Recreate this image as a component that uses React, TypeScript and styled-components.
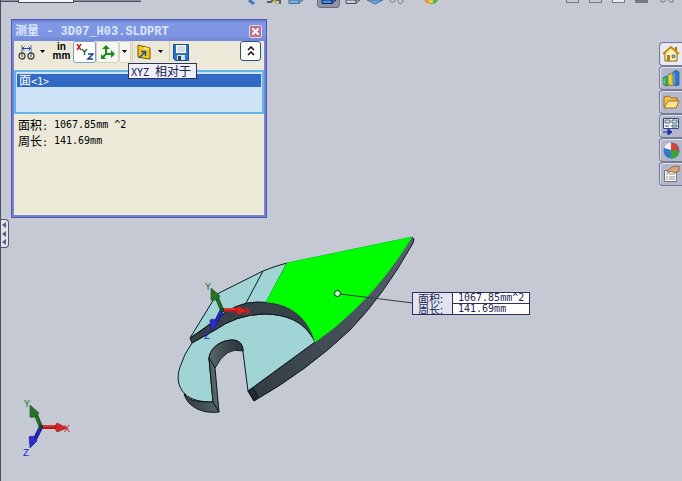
import React from "react";
import styled, { createGlobalStyle, css } from "styled-components";

const mono = `"DejaVu Sans Mono", "Noto Sans CJK SC", monospace`;

const GlobalStyle = createGlobalStyle`
  * { box-sizing: border-box; }
  body { margin: 0; background: #c5c9d4; font: 10px/16px ${mono}; color: #000; }
  button { font: inherit; color: inherit; padding: 0; border: 0; background: none; }
  svg { display: block; }
`;

const Page = styled.div`
  position: relative;
  min-height: 100vh;
  overflow: hidden;
  display: flex;
  flex-direction: column;
  border-left: 1px solid #4b4c5c;
  background: #c5c9d4;
`;

const Han = styled.span`
  font-family: "Noto Sans CJK SC", sans-serif;
  font-size: 12px;
`;

/* ---------- top edge ---------- */

const TopBar = styled.header`
  display: flex;
  align-items: flex-start;
  height: 9px;
`;

const DocTabs = styled.div`
  width: 140px;
  height: 2px;
  padding-left: 17px;
  border-bottom: 1px solid #4b4c5c;
  background: #8d90a0;
`;

const DocTab = styled.div`
  width: 56px;
  height: 3px;
  background: #f4f5fa;
  border: 1px solid #4b4c5c;
  border-top: 0;
`;

const ViewTools = styled.nav`
  display: flex;
  flex: 1;
  gap: 4px;
  padding-left: 102px;
`;

const ViewTool = styled.button<{ $on?: boolean; $lead?: number }>`
  display: flex;
  justify-content: center;
  width: ${(p) => (p.$on ? 23 : 18)}px;
  height: 8px;
  margin-left: ${(p) => p.$lead ?? 0}px;
  overflow: hidden;
  ${(p) =>
    p.$on &&
    css`
      background: #8f93a3;
      border: 1px solid #686b7c;
      border-top: 0;
      border-radius: 0 0 4px 4px;
    `}
`;

const WindowTools = styled.div`
  display: flex;
  gap: 10px;
  padding-right: 6px;
`;

const WindowTool = styled.button<{ $fill?: string }>`
  width: 13px;
  height: 3px;
  background: ${(p) => p.$fill ?? "transparent"};
  border: 1px solid #747887;
  border-top: 0;
`;

/* ---------- side edges ---------- */

const Workspace = styled.div`
  flex: 1;
  display: flex;
  justify-content: space-between;
  align-items: flex-start;
`;

const PanelHandle = styled.button`
  display: flex;
  flex-direction: column;
  align-items: flex-end;
  justify-content: space-evenly;
  width: 8px;
  height: 29px;
  margin-top: 210px;
  padding-right: 2px;
  background: #e0e2ee;
  border: 1px solid #55576a;
  border-left: 0;
  border-radius: 0 4px 4px 0;
`;

const TaskPane = styled.nav`
  display: flex;
  flex-direction: column;
  width: 23px;
  margin-top: 33px;
`;

const TaskTab = styled.button<{ $active?: boolean }>`
  display: flex;
  align-items: center;
  justify-content: center;
  height: 24px;
  background: ${(p) => (p.$active ? "#e9ebf3" : "#b3b7c9")};
  border: 1px solid #777b93;
  border-right: 0;
  border-radius: 4px 0 0 4px;
  box-shadow: inset 1px 1px #dfe2ee;
`;

/* ---------- measure window ---------- */

const Dialog = styled.section`
  position: absolute;
  z-index: 2;
  left: 10px;
  top: 19px;
  width: 256px;
  display: flex;
  flex-direction: column;
  background: #ece9d8;
  border: 1px solid #4f56b4;
  box-shadow: inset 0 0 0 2px #7683d2;
  padding: 0 2px 2px;
`;

const TitleBar = styled.div`
  display: flex;
  align-items: center;
  justify-content: space-between;
  height: 21px;
  margin: 0 -2px;
  padding: 2px 4px 0 3px;
  background: linear-gradient(#6a80d6, #8099e4 4px, #7d94e2 16px, #7388d8);
`;

const Title = styled.h1`
  margin: 0;
  font: bold 12px/18px "Liberation Mono", "Noto Sans CJK SC", monospace;
  color: #dbe5fc;
  white-space: pre;
`;

const CloseButton = styled.button`
  display: flex;
  align-items: center;
  justify-content: center;
  width: 13px;
  height: 13px;
  background: #c0728b;
  border: 1px solid #e3d5e9;
  border-radius: 2px;
`;

const Toolbar = styled.div`
  position: relative;
  display: flex;
  align-items: flex-start;
  height: 29px;
  padding: 0 3px 0 2px;
`;

const ToolButton = styled.button<{ $w: number; $look?: "pressed" | "raised" }>`
  display: flex;
  align-items: center;
  justify-content: center;
  width: ${(p) => p.$w}px;
  height: 22px;
  border-radius: 3px;
  ${(p) =>
    p.$look === "pressed" &&
    css`
      background: #fff;
      border: 1px solid #7e9fbd;
    `}
  ${(p) =>
    p.$look === "raised" &&
    css`
      background: #f7f6ee;
      border: 1px solid #d5d2c0;
    `}
`;

const UnitButton = styled(ToolButton)`
  flex-direction: column;
  font: bold 10px/9px "Liberation Sans", sans-serif;
  padding-bottom: 3px;
`;

const Divider = styled.span`
  width: 1px;
  height: 20px;
  margin: 0 1px;
  background: #cfccba;
`;

const Collapse = styled.button`
  display: flex;
  align-items: center;
  justify-content: center;
  width: 21px;
  height: 20px;
  margin-left: auto;
  background: #fbfbf8;
  border: 1px solid #29527f;
  border-radius: 3px;
`;

const Tooltip = styled.div`
  position: absolute;
  z-index: 1;
  left: 114px;
  top: 22px;
  height: 16px;
  padding: 0 5px 0 2px;
  line-height: 13px;
  white-space: pre;
  color: #20204c;
  background: #eeeff8;
  border: 1px solid #30305c;
`;

const Selection = styled.ul`
  height: 44px;
  margin: 0;
  padding: 2px 1px;
  list-style: none;
  background: #cfe3f7;
  border: 2px solid #62b6e8;
`;

const Selected = styled.li`
  height: 13px;
  padding-left: 2px;
  line-height: 12px;
  color: #fff;
  background: #316ac5;
`;

const Results = styled.dl`
  display: grid;
  grid-template-columns: 36px 1fr;
  align-content: start;
  height: 101px;
  margin: 0;
  padding: 3px 4px;
  line-height: 16px;

  dt, dd { margin: 0; height: 16px; white-space: pre; }
`;

/* ---------- graphics area ---------- */

const ModelView = styled.svg`
  position: absolute;
  left: 169px;
  top: 230px;
`;

const Triad = styled.svg`
  position: absolute;
  left: 14px;
  top: 395px;
`;

const Callout = styled.table`
  position: absolute;
  left: 411px;
  top: 292px;
  border-collapse: collapse;
  line-height: 10px;
  color: #252552;
  background: #fff;
  border: 1px solid #2e2e5c;

  th, td { height: 11px; padding: 0 5px; font-weight: normal; text-align: left; white-space: pre; }
  th {
    width: 40px;
    font: 11px/10px "Noto Sans CJK SC", sans-serif;
    background: #e1e4ee;
    border-right: 1px solid #2e2e5c;
  }
  tr + tr td { border-top: 1px solid #2e2e5c; }
`;

/* ---------- icons ---------- */

const Caret = () => (
  <svg width="6" height="4" viewBox="0 0 6 4" aria-hidden="true">
    <path d="M0 0h5L2.500 3z" fill="#000" />
  </svg>
);

const MeasureIcon = () => (
  <svg width="17" height="17" viewBox="0 0 17 17" fill="none" aria-hidden="true">
    <path d="M4 1v10M13 1v10" stroke="#536aaf" />
    <path d="M4 4.500h9M6.500 2.500L4.500 4.500l2 2M10.500 2.500l2 2-2 2" stroke="#2447b8" />
    <circle cx="4" cy="12" r="3" stroke="#454545" strokeWidth="1.300" />
    <circle cx="13" cy="12" r="3" stroke="#454545" strokeWidth="1.300" />
    <circle cx="4" cy="12" r="1" fill="#777" />
    <circle cx="13" cy="12" r="1" fill="#777" />
  </svg>
);

const XyzIcon = () => (
  <svg width="18" height="18" viewBox="0 0 18 18" fill="none" strokeWidth="1.500" aria-hidden="true">
    <path d="M1 1l4 6M5 1L1 7" stroke="#c9202c" />
    <path d="M6 6l2.500 3L11 6M8.500 9v3" stroke="#26752c" />
    <path d="M12 11h5l-5 5h5" stroke="#1c3f9e" />
  </svg>
);

const AxisIcon = () => (
  <svg width="16" height="16" viewBox="0 0 16 16" aria-hidden="true">
    <path d="M6 3v7h7M6 10l-4 4" fill="none" stroke="#16891f" strokeWidth="2" />
    <path d="M2 5l4-4 4 4zM11 6l4 4-4 4zM1 10v5h5z" fill="#16891f" />
  </svg>
);

const ProjectIcon = () => (
  <svg width="15" height="16" viewBox="0 0 15 16" aria-hidden="true">
    <path d="M1 1l4 1 8 2v11l-7-1-5-1z" fill="#f5c713" stroke="#6e5505" />
    <path d="M7 4l5 1" stroke="#fde66e" strokeWidth="2" />
    <path d="M2 14l6-6M4 7.500h4.500V12" fill="none" stroke="#244caf" strokeWidth="1.500" />
  </svg>
);

const SaveIcon = () => (
  <svg width="16" height="17" viewBox="0 0 16 17" aria-hidden="true">
    <path d="M.5.500h15v16h-13l-2-2z" fill="#2875c5" stroke="#174d93" />
    <path d="M3 1h10v8H3z" fill="#fff" />
    <path d="M4 3h8M4 5h8M4 7h8" stroke="#aebac8" />
    <path d="M4 11h8v5H4z" fill="#d6dfe8" />
    <path d="M5 12h3v4H5z" fill="#193f76" />
  </svg>
);

const HomeIcon = () => (
  <svg width="18" height="18" viewBox="0 0 18 18" aria-hidden="true">
    <path d="M3 8v8h12V8L9 2z" fill="#fff3b4" stroke="#87631a" />
    <path d="M13 2h2v5h-2z" fill="#b36b21" />
    <path d="M1 9l8-7 8 7" fill="none" stroke="#c78711" strokeWidth="2" />
    <path d="M5 10h3v6H5z" fill="#b47b24" />
    <path d="M10 10h3v3h-3z" fill="#69a4d5" stroke="#725b2b" strokeWidth=".5" />
  </svg>
);

const LibraryIcon = () => (
  <svg width="18" height="18" viewBox="0 0 18 18" stroke="#205075" strokeWidth=".6" aria-hidden="true">
    <path d="M1 9l3-2 3 2v7l-3 1-3-2z" fill="#3cb13e" />
    <path d="M6 6l3-2 3 2v10l-3 1-3-2z" fill="#ecc81e" />
    <path d="M11 3l3-2 3 2v13l-3 1-3-2z" fill="#2f78cf" />
    <path d="M2 10v5M7 7v8M12 4v11" stroke="#e9f5ff" />
  </svg>
);

const FolderIcon = () => (
  <svg width="17" height="16" viewBox="0 0 17 16" stroke="#a36f16" aria-hidden="true">
    <path d="M1 13V3l5-1 2 2h6v3" fill="#f0bf52" />
    <path d="M1 14L5 7h11l-3 7z" fill="#ffe391" />
  </svg>
);

const PaletteIcon = () => (
  <svg width="18" height="18" viewBox="0 0 18 18" aria-hidden="true">
    <path d="M1.500 1.500h15v10h-15z" fill="#f8fafe" stroke="#304c86" />
    <path d="M3 3h5v3H3zM10 3h5v3h-5zM10 8h5v2h-5z" fill="#ede7a5" stroke="#49679c" />
    <path d="M3 9h4" stroke="#304c86" />
    <path d="M1 15h8M6 12l4 3-4 3z" fill="#162eac" stroke="#162eac" />
  </svg>
);

const AppearanceIcon = () => (
  <svg width="17" height="17" viewBox="0 0 17 17" aria-hidden="true">
    <circle cx="8.500" cy="8.500" r="8" fill="#3178d1" />
    <path d="M8 8L1 6A8 8 0 0 1 8 .5z" fill="#f4f4ee" />
    <path d="M8 8V.500A8 8 0 0 1 16 9z" fill="#d9422c" />
    <path d="M8 8l8.500 1a8 8 0 0 1-9 7.500z" fill="#38a63c" />
  </svg>
);

const PropertiesIcon = () => (
  <svg width="18" height="18" viewBox="0 0 18 18" aria-hidden="true">
    <path d="M2.500 5.500h12v11h-12z" fill="#f8f8f4" stroke="#74747b" />
    <path d="M4 9h2M7 9h6M4 12h2M7 12h6M4 14h2M7 14h6" stroke="#92939a" />
    <path d="M5 6l5-4 7-1v5l-5 2-2-2-4 2z" fill="#d9a674" stroke="#785134" strokeWidth=".7" />
  </svg>
);

const CubeFoot = ({ fill, stroke }: { fill: string; stroke: string }) => (
  <svg width="16" height="6" viewBox="0 0 16 6" stroke={stroke} aria-hidden="true">
    <path d="M1 0v3.500h10V0z" fill={fill} />
    <path d="M11 3.500L15 0h-4z" fill={fill} fillOpacity=".7" />
  </svg>
);

const LeftArrow = () => (
  <svg width="4" height="6" viewBox="0 0 4 6" aria-hidden="true">
    <path d="M4 0v6L0 3z" fill="#595c88" />
  </svg>
);

const AxisTriad = () => (
  <g fontFamily="Liberation Mono, monospace" fontSize="10">
    <path d="M0 0L-5-12" stroke="#165c1d" strokeWidth="4" />
    <path d="M-1 0L-5-12" stroke="#2e8632" strokeWidth="1" />
    <path d="M-11-22l9 8c-2 4-6 5-9 4z" fill="#26722a" stroke="#174b1d" strokeWidth=".6" />
    <path d="M0 0L-6 12" stroke="#1717a1" strokeWidth="4" />
    <path d="M0 0L-6 12" stroke="#3b3bd6" />
    <path d="M-11 21l-1-11c3-2 7 0 8 4z" fill="#2d2dca" stroke="#171785" strokeWidth=".6" />
    <path d="M0 0h17" stroke="#b61a1a" strokeWidth="4" />
    <path d="M0-1h17" stroke="#e55151" />
    <path d="M26 1L16 5c-2-2-2-7 0-9z" fill="#d52424" stroke="#8e1515" strokeWidth=".6" />
    <path d="M-2-2h4v4h-4z" fill="#173e31" />
    <text x="-17" y="-20" fill="#22722a">Y</text>
    <text x="23" y="5" fill="#d12626">X</text>
    <text x="-18" y="29" fill="#2525c9">Z</text>
  </g>
);

const Model = () => (
  <ModelView width="270" height="190" viewBox="170 230 270 190" role="img" aria-label="3D07_H03">
    <defs>
      <linearGradient id="edge" x1="0" y1="1" x2="1" y2="0">
        <stop offset="0" stopColor="#303c41" />
        <stop offset="1" stopColor="#596370" />
      </linearGradient>
      <linearGradient id="slot" x1="0" x2="1">
        <stop offset="0" stopColor="#59696d" />
        <stop offset=".6" stopColor="#354145" />
        <stop offset="1" stopColor="#2d383b" />
      </linearGradient>
      <linearGradient id="rim" x1="0" x2="1">
        <stop offset="0" stopColor="#303b3f" />
        <stop offset="1" stopColor="#526568" />
      </linearGradient>
    </defs>
    <g stroke="#101719" strokeLinejoin="round">
      <path d="M190 338L217 294 263 271Q275 266 287 263L266 303Q237 300 210 324z" fill="#a1d4d4" />
      <path d="M263 271L245 305" />
      <path d="M412 237L414 239 413 243Q384 295 350 330Q308 370 254 401L248 391 315 342z" fill="url(#edge)" />
      <path d="M248 391L254 401 258 396 253 388z" fill="#222c30" />
      <path d="M192 343L215 330Q236 315 263 314C290 314 308 324 315 342L248 391 243 352C243 342 238 340 231 340C218 341 209 350 209 359L213 402C201 402 191 400 185 394C177 386 177 376 180 367Q184 354 192 343z" fill="#a1d4d4" />
      <path d="M190 338Q204 330 215 320Q236 302 257 302C285 302 306 312 315 342C306 324 290 314 263 314Q236 315 215 330L192 343z" fill="#374246" />
      <path d="M209 359C209 350 218 341 231 340C239 340 243 344 243 351Q226 346 215 368z" fill="url(#slot)" />
      <path d="M209 358L215 368 219 412 213 402z" fill="#53666a" />
      <path d="M184 394C190 402 201 402 213 402L219 412C202 414 188 407 184 394z" fill="url(#rim)" />
    </g>
    <path d="M287 263L412 237Q384 282 355 309Q336 328 315 342C308 316 288 303 266 302z" fill="#00ff00" stroke="#10d421" />
    <path d="M340 294L413 303" stroke="#333842" />
    <circle cx="337.500" cy="293.500" r="3" fill="#c8ffd0" stroke="#182018" />
    <g transform="translate(222 310)">
      <AxisTriad />
    </g>
  </ModelView>
);

export default function App() {
  return (
    <>
      <GlobalStyle />
      <Page>
        <TopBar>
          <DocTabs>
            <DocTab />
          </DocTabs>
          <ViewTools aria-label="视图">
            <ViewTool aria-label="缩放">
              <svg width="10" height="6" viewBox="0 0 10 6">
                <path d="M2 0l5 4" stroke="#4679bd" strokeWidth="3" />
              </svg>
            </ViewTool>
            <ViewTool aria-label="上一视图">
              <svg width="16" height="5" viewBox="0 0 16 5">
                <path d="M1 2h4l2-2h7v4" fill="none" stroke="#575d6c" strokeWidth="2" />
                <path d="M8 0l3 4" stroke="#c6b52c" strokeWidth="2" />
              </svg>
            </ViewTool>
            <ViewTool aria-label="剖面视图">
              <CubeFoot fill="#76b0e4" stroke="#4d7299" />
            </ViewTool>
            <ViewTool $on $lead={8} aria-label="带边线上色">
              <CubeFoot fill="#4d91e4" stroke="#0c276c" />
            </ViewTool>
            <ViewTool aria-label="线架图">
              <CubeFoot fill="#c9ced9" stroke="#4d5462" />
            </ViewTool>
            <ViewTool aria-label="视图定向">
              <svg width="16" height="5" viewBox="0 0 16 5">
                <path d="M0 0l8 4 8-4z" fill="#6baae0" stroke="#4a7099" />
              </svg>
            </ViewTool>
            <ViewTool aria-label="隐藏项目">
              <svg width="16" height="5" viewBox="0 0 16 5" fill="none" stroke="#737989">
                <path d="M1 0c0 3 5 3 5 0M9 0c0 5 5 5 5 0" />
              </svg>
            </ViewTool>
            <ViewTool $lead={12} aria-label="外观">
              <svg width="16" height="4" viewBox="0 0 16 4">
                <path d="M1 0h7v4C4 4 2 2 1 0" fill="#e69442" />
                <path d="M8 0h7c-1 3-4 4-7 4z" fill="#4bb649" />
                <path d="M5 0h5v3H7z" fill="#e9d145" />
              </svg>
            </ViewTool>
          </ViewTools>
          <WindowTools>
            <WindowTool aria-label="新窗口" />
            <WindowTool aria-label="最小化" />
            <WindowTool aria-label="最大化" $fill="#e9edf5" />
            <WindowTool aria-label="还原" $fill="#747887" />
            <ViewTool aria-label="关闭文档">
              <svg width="14" height="3" viewBox="0 0 14 3" fill="none" stroke="#747887">
                <path d="M1 0v2h3l2-2M8 0l2 2h3V0" />
              </svg>
            </ViewTool>
          </WindowTools>
        </TopBar>

        <Workspace>
          <PanelHandle aria-label="展开面板">
            <LeftArrow />
            <LeftArrow />
            <LeftArrow />
          </PanelHandle>
          <TaskPane aria-label="任务窗格">
            <TaskTab $active aria-label="资源"><HomeIcon /></TaskTab>
            <TaskTab aria-label="设计库"><LibraryIcon /></TaskTab>
            <TaskTab aria-label="文件探索器"><FolderIcon /></TaskTab>
            <TaskTab aria-label="视图调色板"><PaletteIcon /></TaskTab>
            <TaskTab aria-label="外观"><AppearanceIcon /></TaskTab>
            <TaskTab aria-label="自定义属性"><PropertiesIcon /></TaskTab>
          </TaskPane>
        </Workspace>

        <Model />

        <Callout>
          <tbody>
            <tr>
              <th scope="row">面积:</th>
              <td>1067.85mm^2</td>
            </tr>
            <tr>
              <th scope="row">周长:</th>
              <td>141.69mm</td>
            </tr>
          </tbody>
        </Callout>

        <Triad width="62" height="68" viewBox="-26 -32 62 68" role="img" aria-label="XYZ">
          <AxisTriad />
        </Triad>

        <Dialog aria-label="测量">
          <TitleBar>
            <Title>测量 - 3D07_H03.SLDPRT</Title>
            <CloseButton aria-label="关闭">
              <svg width="7" height="7" viewBox="0 0 7 7">
                <path d="M0 0l7 7M7 0L0 7" stroke="#fff" strokeWidth="2" />
              </svg>
            </CloseButton>
          </TitleBar>
          <Toolbar>
            <ToolButton $w={20} aria-label="圆弧/圆测量"><MeasureIcon /></ToolButton>
            <ToolButton $w={14} aria-label="圆弧选项"><Caret /></ToolButton>
            <UnitButton $w={23}>
              <span>in</span>
              <span>mm</span>
            </UnitButton>
            <ToolButton $w={23} $look="pressed" aria-label="显示 XYZ 测量" aria-pressed="true"><XyzIcon /></ToolButton>
            <ToolButton $w={23} $look="raised" aria-label="XYZ 相对于"><AxisIcon /></ToolButton>
            <ToolButton $w={12} $look="raised" aria-label="坐标系选项"><Caret /></ToolButton>
            <Divider />
            <ToolButton $w={20} aria-label="投影于"><ProjectIcon /></ToolButton>
            <ToolButton $w={14} aria-label="投影选项"><Caret /></ToolButton>
            <Divider />
            <ToolButton $w={20} aria-label="测量历史"><SaveIcon /></ToolButton>
            <Collapse aria-label="折叠">
              <svg width="8" height="10" viewBox="0 0 8 10" fill="none" stroke="#111" strokeWidth="1.500">
                <path d="M1 4l3-3 3 3M1 9l3-3 3 3" />
              </svg>
            </Collapse>
            <Tooltip role="tooltip">XYZ <Han>相对于</Han></Tooltip>
          </Toolbar>
          <Selection>
            <Selected><Han>面</Han>&lt;1&gt;</Selected>
          </Selection>
          <Results>
            <dt><Han>面积</Han>:</dt>
            <dd>1067.85mm ^2</dd>
            <dt><Han>周长</Han>:</dt>
            <dd>141.69mm</dd>
          </Results>
        </Dialog>
      </Page>
    </>
  );
}
